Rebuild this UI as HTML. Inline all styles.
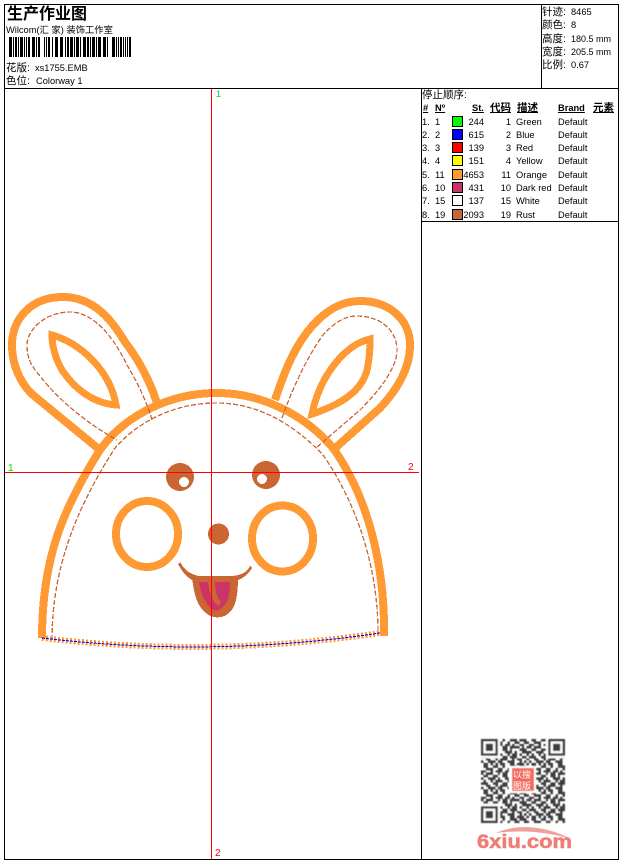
<!DOCTYPE html>
<html><head><meta charset="utf-8"><style>
html,body{margin:0;padding:0;background:#fff}
body{width:620px;height:860px;position:relative;overflow:hidden;font-family:"Liberation Sans","WenQuanYi Zen Hei","Noto Sans CJK SC",sans-serif;font-size:9.3px;color:#000}
.t{position:absolute;white-space:nowrap;line-height:12px;height:12px;margin-top:2px}
.c{font-size:10.5px}
.r{text-align:right}
.b{font-weight:bold;text-decoration:underline}
.s{position:absolute;left:452px;width:9px;height:9px;border:1px solid #000}
svg{position:absolute;left:0;top:0}
.l{position:absolute;background:#ff0000}
</style></head><body>
<svg width="620" height="860" viewBox="0 0 620 860">
<defs>
<pattern id="qd" width="20" height="11" patternUnits="userSpaceOnUse">
<g transform="translate(-8 -17)" fill="none" stroke="#3c3c3c" stroke-width="1" shape-rendering="crispEdges">
<path d="M9 17.500h2M13 17.500h2M17 17.500h1M20 17.500h3M24 17.500h3M10 18.500h3M15 18.500h2M19 18.500h1M22 18.500h2M26 18.500h2M8 19.500h2M12 19.500h1M14 19.500h3M18 19.500h2M21 19.500h1M24 19.500h2M8 20.500h1M10 20.500h3M15 20.500h1M17 20.500h2M20 20.500h4M25 20.500h1M27 20.500h1M9 21.500h2M13 21.500h2M17 21.500h2M20 21.500h1M24 21.500h3M8 22.500h1M11 22.500h3M15 22.500h1M18 22.500h3M22 22.500h1M25 22.500h3M9 23.500h1M12 23.500h1M14 23.500h3M19 23.500h1M21 23.500h2M24 23.500h1M27 23.500h1M8 24.500h3M13 24.500h2M17 24.500h2M20 24.500h3M25 24.500h2M10 25.500h2M14 25.500h1M16 25.500h3M21 25.500h1M23 25.500h2M27 25.500h1M8 26.500h1M11 26.500h3M15 26.500h2M19 26.500h3M24 26.500h1M26 26.500h1M9 27.500h2M12 27.500h1M14 27.500h1M16 27.500h2M20 27.500h2M23 27.500h3M27 27.500h1"/>
</g>
</pattern>
<filter id="bl" x="-5%" y="-5%" width="110%" height="110%"><feGaussianBlur stdDeviation="0.45"/></filter>
</defs>
<g fill="none" stroke="#000" stroke-width="1" shape-rendering="crispEdges">
<path d="M4.5 4.5H618.5V859.5H4.5ZM4.5 88.5H618.5M541.5 4.5V88.5M421.5 88.5V859.5M421.5 221.5H618.5"/>
</g>
<g fill="#000" shape-rendering="crispEdges">
<path d="M9 37h3v20h-3zM13 37h1v20h-1zM15 37h2v20h-2zM18 37h1v20h-1zM20 37h3v20h-3zM24 37h1v20h-1zM26 37h1v20h-1zM28 37h2v20h-2zM32 37h3v20h-3zM36 37h1v20h-1zM38 37h2v20h-2zM44 37h1v20h-1zM46 37h1v20h-1zM48 37h2v20h-2zM52 37h1v20h-1zM55 37h3v20h-3zM60 37h3v20h-3zM65 37h1v20h-1zM67 37h2v20h-2zM70 37h3v20h-3zM74 37h1v20h-1zM76 37h3v20h-3zM80 37h1v20h-1zM83 37h3v20h-3zM87 37h2v20h-2zM90 37h1v20h-1zM92 37h3v20h-3zM96 37h1v20h-1zM98 37h3v20h-3zM103 37h3v20h-3zM107 37h1v20h-1zM112 37h3v20h-3zM116 37h1v20h-1zM118 37h1v20h-1zM120 37h2v20h-2zM123 37h1v20h-1zM125 37h1v20h-1zM127 37h1v20h-1zM129 37h2v20h-2z"/>
</g>
<g fill="none" shape-rendering="crispEdges">
<g stroke="#ff9933" stroke-width="8">
<path d="M42 638C42 560 62 510 100 450C125 415 170 393 217 393C262 393 305 415 333 448C370 500 385 570 384 636"/>
<path d="M157 403C148 375 135 355 125 342C113 322 95 297 63 297C30 297 12 320 12 345C12 370 25 388 33 395L100 450"/>
<path d="M275 400C285 370 295 345 313 325C325 312 340 301 360 301C390 301 410 320 410 345C410 370 395 392 380 408L333 450"/>
<ellipse cx="147" cy="534" rx="31" ry="33"/>
<ellipse cx="282.5" cy="538.5" rx="30.5" ry="33"/>
</g>
<g stroke="#ff9933" stroke-width="7">
<path d="M52 335C80 343 110 370 116 405C90 403 72 385 62 370C55 358 52 345 52 335Z"/>
<path d="M370 339C345 345 320 375 312 414C340 405 365 390 368 365C370 355 370 345 370 339Z"/>
</g>
<g stroke="#c96633" stroke-width="1.3" stroke-dasharray="5 2">
<path d="M52 640C52 570 75 510 115 448C135 425 170 403 217 403C258 403 295 425 323 455C358 505 378 570 378 632"/>
<path d="M152 420C145 395 130 370 127 365C115 340 95 312 70 312C45 312 27 330 27 345C27 360 33 368 40 376C60 402 90 425 117 440"/>
<path d="M282 418C290 395 305 360 323 335C335 322 345 316 357 316C380 316 397 330 397 350C397 370 375 395 360 410L317 447"/>
</g>
<path d="M42 638Q211 658 380 633" stroke="#ff9933" stroke-width="6" stroke-dasharray="2 2"/>
<path d="M42 638Q211 658 380 633" stroke="#0000ff" stroke-width="1" stroke-dasharray="3 1"/>
</g>
<g shape-rendering="crispEdges">
<ellipse cx="180" cy="477" rx="14" ry="14" fill="#c96633"/>
<circle cx="184" cy="482" r="5" fill="#fff"/>
<ellipse cx="266" cy="475" rx="14" ry="14" fill="#c96633"/>
<circle cx="262" cy="479" r="5" fill="#fff"/>
<circle cx="218.500" cy="534" r="10.500" fill="#c96633"/>
<path d="M180 562C184 570 190 574 198 576H232C242 575 247 572 250 566L252 568C248 575 242 579 238 580H192C187 577 182 572 178 564Z" fill="#c96633"/>
<path d="M192 577H238C238 595 236 606 230 612C224 619 212 619 206 613C197 606 194 595 192 577Z" fill="#c96633"/>
<path d="M199 582H208C209 592 212 602 219 606L221 602C217 598 215 592 215 582H230C230 596 227 606 219 610C214 612 209 608 206 602C202 596 200 590 199 582Z" fill="#cc3366"/>
</g>
<g filter="url(#bl)">
<g transform="translate(481 739) scale(2.4)">
<rect width="35" height="35" fill="url(#qd)"/>
<path fill="#fff" d="M0 0h8v8h-8zM27 0h8v8h-8zM0 27h8v8h-8z"/>
<path fill="#3c3c3c" fill-rule="evenodd" d="M0 0h7v7h-7zM1 1v5h5v-5zM2 2h3v3h-3zM28 0h7v7h-7zM29 1v5h5v-5zM30 2h3v3h-3zM0 28h7v7h-7zM1 29v5h5v-5zM2 30h3v3h-3z"/>
</g>
<rect x="509" y="766" width="27" height="27" fill="#fff"/>
<rect x="512" y="768" width="22" height="23" fill="#f26b61"/>
</g>
<text x="513" y="778" font-size="9" fill="#fff" font-family="'Noto Sans CJK SC',sans-serif">以搜</text>
<text x="513" y="789" font-size="9" fill="#fff" font-family="'Noto Sans CJK SC',sans-serif">图版</text>
<path d="M496 833C515 824 545 825 571 839C545 831 520 830 496 833Z" fill="#f0a09a"/>
<text x="477" y="848" font-size="19" font-weight="bold" fill="#f07d75" stroke="#f07d75" stroke-width=".5" textLength="95" lengthAdjust="spacingAndGlyphs" font-family="'Liberation Sans',sans-serif">6xiu.com</text>
</svg>

<div class="l" style="left:211px;top:89px;width:1px;height:770px"></div>
<div class="l" style="left:5px;top:472px;width:414px;height:1px"></div>

<div class="t" style="left:7px;top:4px;font-size:16px;font-weight:bold;line-height:18px;height:18px">生产作业图</div>
<div class="t" style="left:6px;top:22px">Wilcom(汇 家) 装饰工作室</div>
<div class="t c" style="left:6px;top:60px">花版:</div><div class="t" style="left:35px;top:60px">xs1755.EMB</div>
<div class="t c" style="left:6px;top:73px">色位:</div><div class="t" style="left:36px;top:73px">Colorway 1</div>

<div class="t c" style="left:542px;top:4px">针迹:</div><div class="t" style="left:571px;top:4px">8465</div>
<div class="t c" style="left:542px;top:17px">颜色:</div><div class="t" style="left:571px;top:17px">8</div>
<div class="t c" style="left:542px;top:31px">高度:</div><div class="t" style="left:571px;top:31px;font-size:9px">180.5 mm</div>
<div class="t c" style="left:542px;top:44px">宽度:</div><div class="t" style="left:571px;top:44px;font-size:9px">205.5 mm</div>
<div class="t c" style="left:542px;top:57px">比例:</div><div class="t" style="left:571px;top:57px">0.67</div>

<div class="t c" style="left:422px;top:87px">停止顺序:</div>
<div class="t b" style="left:423px;top:100px">#</div>
<div class="t b" style="left:435px;top:100px">Nº</div>
<div class="t b" style="left:472px;top:100px">St.</div>
<div class="t b c" style="left:490px;top:100px">代码</div>
<div class="t b c" style="left:517px;top:100px">描述</div>
<div class="t b" style="left:558px;top:100px">Brand</div>
<div class="t b c" style="left:593px;top:100px">元素</div>

<div class="t" style="left:422px;top:114px">1.</div><div class="t" style="left:435px;top:114px">1</div><div class="s" style="top:116px;background:#00ff00"></div><div class="t r" style="left:460px;width:24px;top:114px">244</div><div class="t r" style="left:490px;width:21px;top:114px">1</div><div class="t" style="left:516px;top:114px">Green</div><div class="t" style="left:558px;top:114px">Default</div>
<div class="t" style="left:422px;top:127px">2.</div><div class="t" style="left:435px;top:127px">2</div><div class="s" style="top:129px;background:#0000ff"></div><div class="t r" style="left:460px;width:24px;top:127px">615</div><div class="t r" style="left:490px;width:21px;top:127px">2</div><div class="t" style="left:516px;top:127px">Blue</div><div class="t" style="left:558px;top:127px">Default</div>
<div class="t" style="left:422px;top:140px">3.</div><div class="t" style="left:435px;top:140px">3</div><div class="s" style="top:142px;background:#ff0000"></div><div class="t r" style="left:460px;width:24px;top:140px">139</div><div class="t r" style="left:490px;width:21px;top:140px">3</div><div class="t" style="left:516px;top:140px">Red</div><div class="t" style="left:558px;top:140px">Default</div>
<div class="t" style="left:422px;top:153px">4.</div><div class="t" style="left:435px;top:153px">4</div><div class="s" style="top:155px;background:#ffff00"></div><div class="t r" style="left:460px;width:24px;top:153px">151</div><div class="t r" style="left:490px;width:21px;top:153px">4</div><div class="t" style="left:516px;top:153px">Yellow</div><div class="t" style="left:558px;top:153px">Default</div>
<div class="t" style="left:422px;top:167px">5.</div><div class="t" style="left:435px;top:167px">11</div><div class="s" style="top:169px;background:#ff9933"></div><div class="t r" style="left:460px;width:24px;top:167px">4653</div><div class="t r" style="left:490px;width:21px;top:167px">11</div><div class="t" style="left:516px;top:167px">Orange</div><div class="t" style="left:558px;top:167px">Default</div>
<div class="t" style="left:422px;top:180px">6.</div><div class="t" style="left:435px;top:180px">10</div><div class="s" style="top:182px;background:#cc3366"></div><div class="t r" style="left:460px;width:24px;top:180px">431</div><div class="t r" style="left:490px;width:21px;top:180px">10</div><div class="t" style="left:516px;top:180px">Dark red</div><div class="t" style="left:558px;top:180px">Default</div>
<div class="t" style="left:422px;top:193px">7.</div><div class="t" style="left:435px;top:193px">15</div><div class="s" style="top:195px;background:#ffffff"></div><div class="t r" style="left:460px;width:24px;top:193px">137</div><div class="t r" style="left:490px;width:21px;top:193px">15</div><div class="t" style="left:516px;top:193px">White</div><div class="t" style="left:558px;top:193px">Default</div>
<div class="t" style="left:422px;top:207px">8.</div><div class="t" style="left:435px;top:207px">19</div><div class="s" style="top:209px;background:#c96633"></div><div class="t r" style="left:460px;width:24px;top:207px">2093</div><div class="t r" style="left:490px;width:21px;top:207px">19</div><div class="t" style="left:516px;top:207px">Rust</div><div class="t" style="left:558px;top:207px">Default</div>

<div class="t" style="left:216px;top:86px;color:#00e000;font-size:9px">1</div>
<div class="t" style="left:8px;top:461px;color:#00e000;font-size:10px">1</div>
<div class="t" style="left:408px;top:460px;color:#f00000;font-size:10px">2</div>
<div class="t" style="left:215px;top:846px;color:#f00000;font-size:10px">2</div>
</body></html>
